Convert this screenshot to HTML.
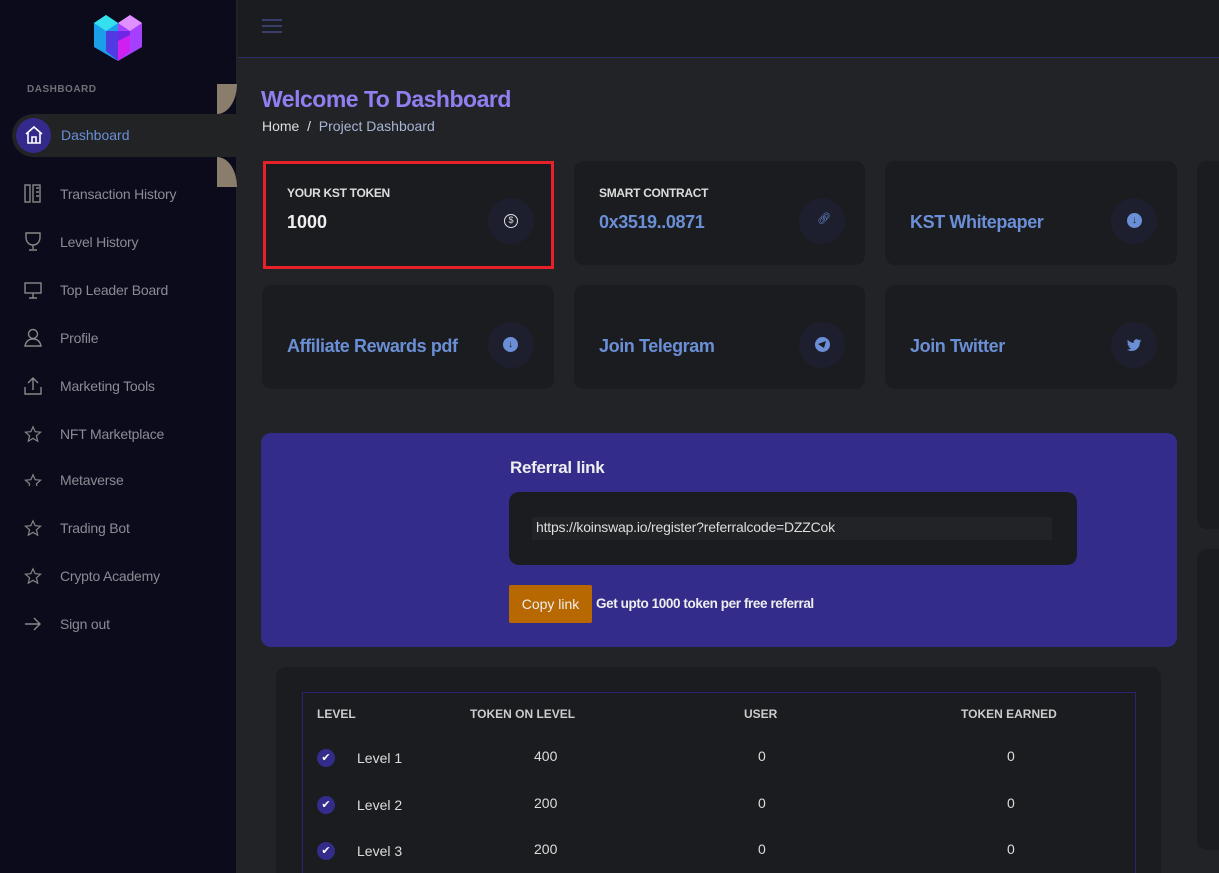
<!DOCTYPE html>
<html style="width:1219px;height:873px;overflow:hidden"><head><meta charset="utf-8"><style>
*{margin:0;padding:0;box-sizing:border-box}
body{width:1219px;height:873px;overflow:hidden;background:#212326;font-family:"Liberation Sans",Arial,sans-serif;position:relative}
.sb{position:absolute;left:0;top:0;width:236px;height:873px;background:#0c0b1b}
.hdr{position:absolute;left:238px;top:0;right:0;height:58px;background:#1b1c1f;border-bottom:1px solid #2c2f66}
.nav{position:absolute;left:24px;width:200px;height:22px;font-size:14px;color:#8b8b95;letter-spacing:-.2px}
.nav svg{position:absolute;left:0;top:-2px}
.nav span{position:absolute;left:36px;white-space:nowrap}
.card{position:absolute;background:#1b1c1f;border-radius:10px}
.ic{position:absolute;width:46px;height:46px;border-radius:50%;background:#1e1f2e}
.blue{color:#6b8fd6;font-weight:bold;font-size:18px;position:absolute;letter-spacing:-.4px}
</style></head><body>
<div class="sb">
<svg style="position:absolute;left:92px;top:11px" width="52" height="52" viewBox="0 0 52 52"><polygon points="2,12 14,4 26,12 26,50 2,36" fill="#1aa0e8"/><polygon points="2,12 14,4 26,12 14,20" fill="#35e0ee"/><polygon points="26,12 38,4 50,12 50,36 26,50" fill="#a540ff"/><polygon points="26,12 38,4 50,12 38,20" fill="#e090ff"/><polygon points="14,20 38,20 38,40 26,50 14,40" fill="#6020e0" opacity=".8"/><polygon points="26,30 38,24 38,40 26,50" fill="#d020f0"/></svg>
<div style="position:absolute;left:27px;top:84px;font-size:10px;font-weight:bold;color:#6f6f78;letter-spacing:.5px">DASHBOARD</div>
</div>
<div style="position:absolute;left:217px;top:84px;width:20px;height:30px;background:#8a7d6c;border-bottom-right-radius:20px 30px"></div>
<div style="position:absolute;left:217px;top:157px;width:20px;height:30px;background:#8a7d6c;border-top-right-radius:20px 30px"></div>
<div style="position:absolute;left:12px;top:114px;width:226px;height:43px;background:#212325;border-radius:22px 0 0 22px"></div>
<div style="position:absolute;left:16px;top:118px;width:35px;height:35px;border-radius:50%;background:#342a8c"></div>
<svg style="position:absolute;left:24px;top:125px" width="20" height="20" viewBox="0 0 20 20" fill="none" stroke="#fff" stroke-width="1.6"><path d="M2 9 L10 2 L18 9 M4 8 V18 H16 V8 M8 18 V12 H12 V18"/></svg>
<div style="position:absolute;left:61px;top:127px;font-size:14px;color:#6b8fd6">Dashboard</div>
<div class="hdr"><svg style="position:absolute;left:24px;top:18px" width="22" height="16"><path d="M0 2H20M0 8H20M0 14H20" stroke="#3a3f6a" stroke-width="2"/></svg></div>

<div class="nav" style="top:186px"><svg width="18" height="20" viewBox="0 0 18 20" fill="none" stroke="#888" stroke-width="1.4"><rect x="1" y="1" width="5" height="17"/><rect x="9" y="1" width="7" height="17"/><path d="M12 4h3M12 8h3M12 12h3"/></svg><span>Transaction History</span></div>
<div class="nav" style="top:234px"><svg width="18" height="20" viewBox="0 0 18 20" fill="none" stroke="#888" stroke-width="1.4"><path d="M2 1h14v4c0 5-3 8-7 8S2 10 2 5z M9 13v4 M5 18h8"/></svg><span>Level History</span></div>
<div class="nav" style="top:282px"><svg width="18" height="20" viewBox="0 0 18 20" fill="none" stroke="#888" stroke-width="1.4"><rect x="1" y="3" width="16" height="10"/><path d="M9 13v5M5 18h8"/></svg><span>Top Leader Board</span></div>
<div class="nav" style="top:330px"><svg width="18" height="20" viewBox="0 0 18 20" fill="none" stroke="#888" stroke-width="1.4"><circle cx="9" cy="6" r="4.5"/><path d="M1 18c1-5 4-7 8-7s7 2 8 7z"/></svg><span>Profile</span></div>
<div class="nav" style="top:378px"><svg width="18" height="20" viewBox="0 0 18 20" fill="none" stroke="#888" stroke-width="1.4"><path d="M9 14V2M4 7l5-5 5 5M1 11v7h16v-7"/></svg><span>Marketing Tools</span></div>
<div class="nav" style="top:426px"><svg width="18" height="20" viewBox="0 0 20 20" fill="none" stroke="#888" stroke-width="1.3"><path d="M10 2l2.4 5.5 6 .5-4.6 4 1.4 6-5.2-3.2-5.2 3.2 1.4-6-4.6-4 6-.5z"/></svg><span>NFT Marketplace</span></div>
<div class="nav" style="top:472px;height:14px;overflow:hidden"><svg width="18" height="20" viewBox="0 0 20 20" fill="none" stroke="#888" stroke-width="1.3" style="top:0"><path d="M10 2l2.4 5.5 6 .5-4.6 4 1.4 6-5.2-3.2-5.2 3.2 1.4-6-4.6-4 6-.5z"/></svg><span style="top:0">Metaverse</span></div>
<div class="nav" style="top:520px"><svg width="18" height="20" viewBox="0 0 20 20" fill="none" stroke="#888" stroke-width="1.3"><path d="M10 2l2.4 5.5 6 .5-4.6 4 1.4 6-5.2-3.2-5.2 3.2 1.4-6-4.6-4 6-.5z"/></svg><span>Trading Bot</span></div>
<div class="nav" style="top:568px"><svg width="18" height="20" viewBox="0 0 20 20" fill="none" stroke="#888" stroke-width="1.3"><path d="M10 2l2.4 5.5 6 .5-4.6 4 1.4 6-5.2-3.2-5.2 3.2 1.4-6-4.6-4 6-.5z"/></svg><span>Crypto Academy</span></div>
<div class="nav" style="top:616px"><svg width="18" height="20" viewBox="0 0 18 20" fill="none" stroke="#888" stroke-width="1.4"><path d="M1 10h15M10 4l6 6-6 6"/></svg><span>Sign out</span></div>

<div style="position:absolute;left:261px;top:86px;font-size:23px;font-weight:bold;color:#8f7ff0;letter-spacing:-.5px">Welcome To Dashboard</div>
<div style="position:absolute;left:262px;top:118px;font-size:14px;color:#ddd">Home &nbsp;/&nbsp; <span style="color:#a9b4d6">Project Dashboard</span></div>

<div class="card" style="left:263px;top:161px;width:291px;height:108px;border:3px solid #e8202a;border-radius:0"></div>
<div style="position:absolute;left:287px;top:186px;font-size:12px;font-weight:bold;color:#ddd;letter-spacing:-.3px">YOUR KST TOKEN</div>
<div style="position:absolute;left:287px;top:212px;font-size:18px;font-weight:bold;color:#eee">1000</div>
<div class="ic" style="left:488px;top:198px"></div><div style="position:absolute;left:504px;top:214px;width:14px;height:14px;border:1.5px solid #ddd;border-radius:50%;font-size:9px;color:#ddd;text-align:center;line-height:11px">$</div>

<div class="card" style="left:574px;top:161px;width:291px;height:104px"></div>
<div style="position:absolute;left:599px;top:186px;font-size:12px;font-weight:bold;color:#ddd;letter-spacing:-.3px">SMART CONTRACT</div>
<div class="blue" style="left:599px;top:212px">0x3519..0871</div>
<div class="ic" style="left:799px;top:198px"></div><div style="position:absolute;left:817px;top:212px;color:#6b8fd6;font-size:11px">🔗︎</div>

<div class="card" style="left:885px;top:161px;width:292px;height:104px"></div>
<div class="blue" style="left:910px;top:212px">KST Whitepaper</div>
<div class="ic" style="left:1111px;top:198px"></div><div style="position:absolute;left:1127px;top:213px;width:15px;height:15px;border-radius:50%;background:#6b8fd6;color:#1b1c1f;font-size:10px;text-align:center;line-height:15px;font-weight:bold">↓</div>

<div class="card" style="left:262px;top:285px;width:292px;height:104px"></div>
<div class="blue" style="left:287px;top:336px">Affiliate Rewards pdf</div>
<div class="ic" style="left:488px;top:322px"></div><div style="position:absolute;left:503px;top:337px;width:15px;height:15px;border-radius:50%;background:#6b8fd6;color:#1b1c1f;font-size:10px;text-align:center;line-height:15px;font-weight:bold">↓</div>

<div class="card" style="left:574px;top:285px;width:291px;height:104px"></div>
<div class="blue" style="left:599px;top:336px">Join Telegram</div>
<div class="ic" style="left:799px;top:322px"></div><div style="position:absolute;left:815px;top:337px;width:15px;height:15px;border-radius:50%;background:#6b8fd6"></div><svg style="position:absolute;left:817px;top:340px" width="10" height="9"><path d="M1 4L9 1 7 8 4 6z" fill="#1b1c1f"/></svg>

<div class="card" style="left:885px;top:285px;width:292px;height:104px"></div>
<div class="blue" style="left:910px;top:336px">Join Twitter</div>
<div class="ic" style="left:1111px;top:322px"></div><svg style="position:absolute;left:1127px;top:339px" width="15" height="13" viewBox="0 0 24 20"><path d="M23 2c-1 .5-2 .7-3 .8 1-.6 2-1.6 2.3-2.8-1 .6-2 1-3.3 1.3C18 .4 16.7 0 15.4 0c-2.6 0-4.7 2.1-4.7 4.7 0 .4 0 .7.1 1C7 5.5 3.6 3.7 1.3.9.9 1.6.7 2.4.7 3.300c0 1.6.8 3.1 2.1 3.9-.8 0-1.5-.2-2.1-.6 0 2.3 1.6 4.2 3.8 4.6-.7.2-1.4.2-2.1.1.6 1.9 2.3 3.2 4.4 3.3-1.6 1.3-3.7 2-5.8 2H0c2.1 1.3 4.6 2.1 7.2 2.1 8.7 0 13.4-7.2 13.4-13.4v-.6C21.5 4 22.3 3.1 23 2z" fill="#6b8fd6"/></svg>

<div class="card" style="left:1197px;top:161px;width:30px;height:368px;border-radius:10px 0 0 10px"></div>
<div class="card" style="left:1197px;top:549px;width:30px;height:301px;border-radius:10px 0 0 10px"></div>

<div style="position:absolute;left:261px;top:433px;width:916px;height:214px;background:#342c8a;border-radius:10px"></div>
<div style="position:absolute;left:510px;top:458px;font-size:17px;font-weight:bold;color:#eee;letter-spacing:-.3px">Referral link</div>
<div style="position:absolute;left:509px;top:492px;width:568px;height:73px;background:#1b1c1f;border-radius:10px"></div>
<div style="position:absolute;left:532px;top:517px;width:520px;height:23px;background:#212326;font-size:14px;color:#ddd;padding:2px 0 0 4px;letter-spacing:-.2px">https://koinswap.io/register?referralcode=DZZCok</div>
<div style="position:absolute;left:509px;top:585px;width:83px;height:38px;background:#b86800;border-radius:2px;font-size:14px;color:#eee;text-align:center;line-height:38px">Copy link</div>
<div style="position:absolute;left:596px;top:596px;font-size:13.5px;font-weight:bold;color:#eee;letter-spacing:-.4px">Get upto 1000 token per free referral</div>

<div class="card" style="left:276px;top:667px;width:885px;height:220px"></div>
<div style="position:absolute;left:302px;top:692px;width:834px;height:200px;border:1px solid #2a2470"></div>
<div style="position:absolute;left:317px;top:707px;font-size:12px;font-weight:bold;color:#ccc">LEVEL</div>
<div style="position:absolute;left:470px;top:707px;font-size:12px;font-weight:bold;color:#ccc">TOKEN ON LEVEL</div>
<div style="position:absolute;left:744px;top:707px;font-size:12px;font-weight:bold;color:#ccc">USER</div>
<div style="position:absolute;left:961px;top:707px;font-size:12px;font-weight:bold;color:#ccc">TOKEN EARNED</div>
<div style="position:absolute;left:317px;top:749px;width:18px;height:18px;border-radius:50%;background:#342c8a;color:#fff;font-size:11px;text-align:center;line-height:18px">✔</div>
<div style="position:absolute;left:357px;top:750px;font-size:14px;color:#ddd">Level 1</div><div style="position:absolute;left:534px;top:748px;font-size:14px;color:#ddd">400</div><div style="position:absolute;left:758px;top:748px;font-size:14px;color:#ddd">0</div><div style="position:absolute;left:1007px;top:748px;font-size:14px;color:#ddd">0</div>
<div style="position:absolute;left:317px;top:796px;width:18px;height:18px;border-radius:50%;background:#342c8a;color:#fff;font-size:11px;text-align:center;line-height:18px">✔</div>
<div style="position:absolute;left:357px;top:797px;font-size:14px;color:#ddd">Level 2</div><div style="position:absolute;left:534px;top:795px;font-size:14px;color:#ddd">200</div><div style="position:absolute;left:758px;top:795px;font-size:14px;color:#ddd">0</div><div style="position:absolute;left:1007px;top:795px;font-size:14px;color:#ddd">0</div>
<div style="position:absolute;left:317px;top:842px;width:18px;height:18px;border-radius:50%;background:#342c8a;color:#fff;font-size:11px;text-align:center;line-height:18px">✔</div>
<div style="position:absolute;left:357px;top:843px;font-size:14px;color:#ddd">Level 3</div><div style="position:absolute;left:534px;top:841px;font-size:14px;color:#ddd">200</div><div style="position:absolute;left:758px;top:841px;font-size:14px;color:#ddd">0</div><div style="position:absolute;left:1007px;top:841px;font-size:14px;color:#ddd">0</div>
</body></html>
